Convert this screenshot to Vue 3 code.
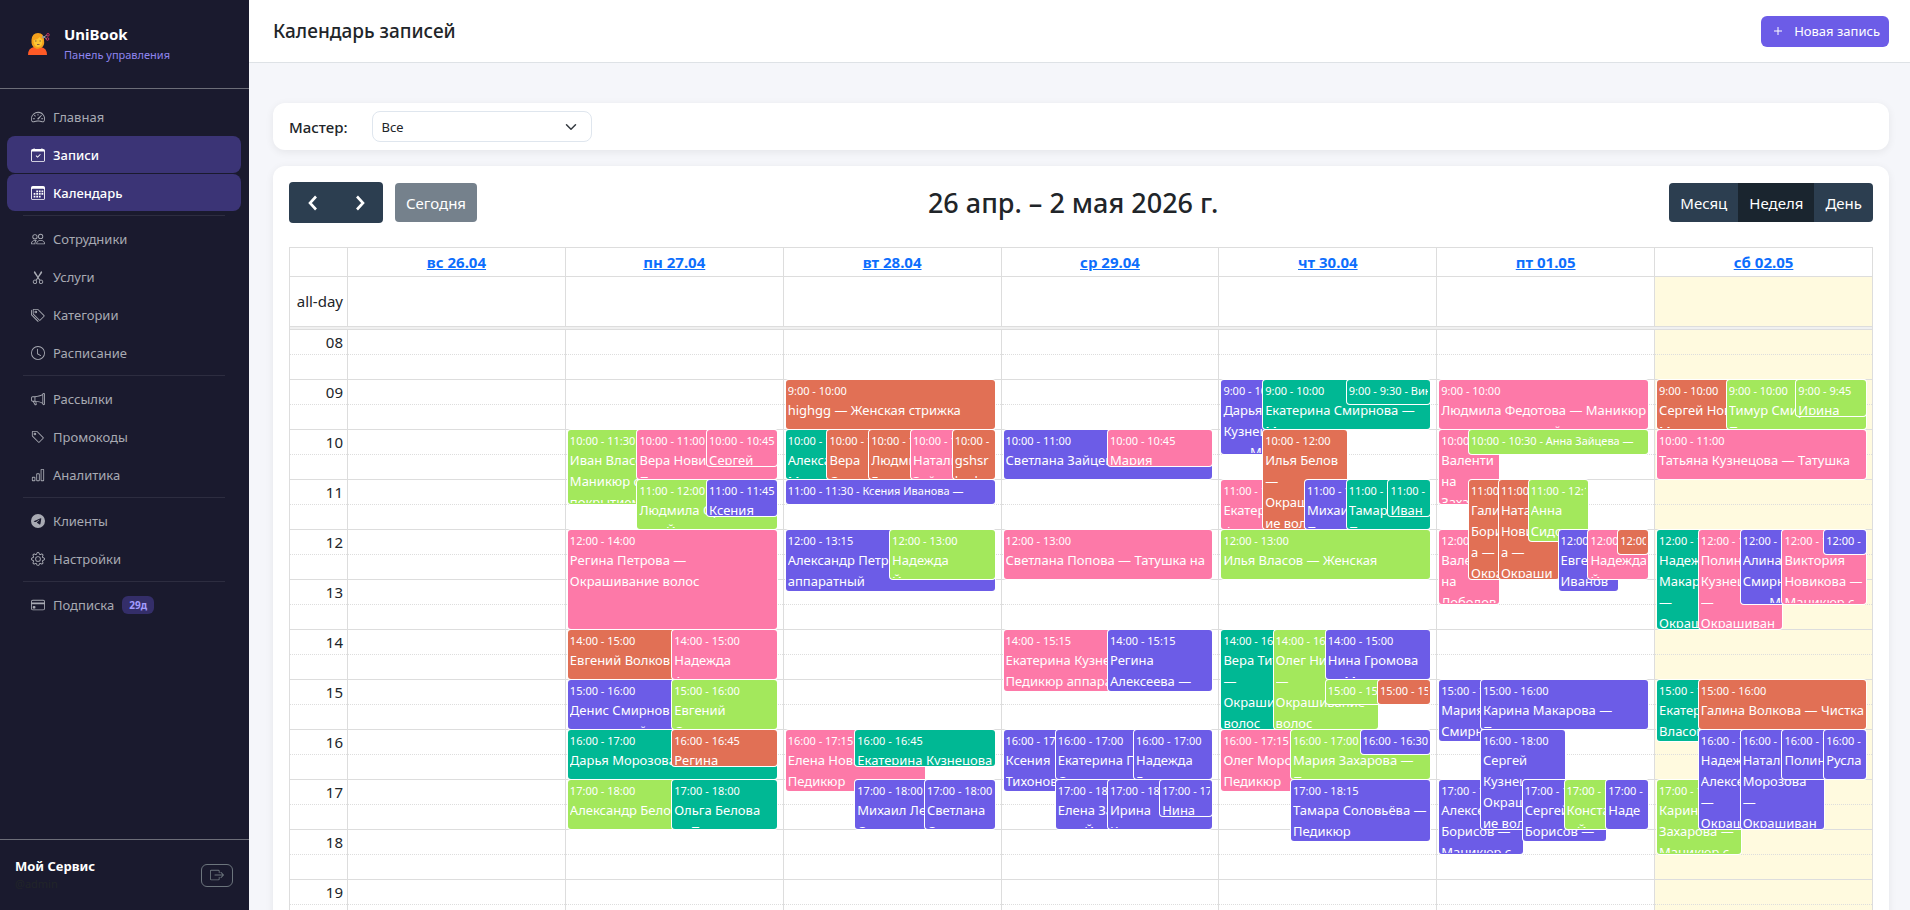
<script setup>
import { ref } from 'vue'

const master = ref('all')
const view = ref('week')

const views = [
  { id: 'month', label: 'Месяц' },
  { id: 'week', label: 'Неделя' },
  { id: 'day', label: 'День' }
]

const menu = [
  [
    { icon: 'speedometer', label: 'Главная' },
    { icon: 'calendarCheck', label: 'Записи', active: true },
    { icon: 'calendarWeek', label: 'Календарь', active: true }
  ],
  [
    { icon: 'people', label: 'Сотрудники' },
    { icon: 'scissors', label: 'Услуги' },
    { icon: 'tags', label: 'Категории' },
    { icon: 'clock', label: 'Расписание' }
  ],
  [
    { icon: 'megaphone', label: 'Рассылки' },
    { icon: 'tag', label: 'Промокоды' },
    { icon: 'chart', label: 'Аналитика' }
  ],
  [
    { icon: 'telegram', label: 'Клиенты' },
    { icon: 'gear', label: 'Настройки' }
  ],
  [
    { icon: 'card', label: 'Подписка', badge: '29д' }
  ]
]

const icons = {
  speedometer: [
    'M8 4a.5.5 0 0 1 .5.5V6a.5.5 0 0 1-1 0V4.5A.5.5 0 0 1 8 4M3.732 5.732a.5.5 0 0 1 .707 0l.915.914a.5.5 0 1 1-.708.708l-.914-.915a.5.5 0 0 1 0-.707M2 10a.5.5 0 0 1 .5-.5h1.586a.5.5 0 0 1 0 1H2.5A.5.5 0 0 1 2 10m9.5 0a.5.5 0 0 1 .5-.5h1.5a.5.5 0 0 1 0 1H12a.5.5 0 0 1-.5-.5m.754-4.246a.39.39 0 0 0-.527-.02L7.547 9.31a.91.91 0 1 0 1.302 1.258l3.434-4.297a.39.39 0 0 0-.029-.518z',
    'M0 10a8 8 0 1 1 15.547 2.661c-.442 1.253-1.845 1.602-2.932 1.25C11.309 13.488 9.475 13 8 13c-1.474 0-3.31.488-4.615.911-1.087.352-2.49.003-2.932-1.25A8 8 0 0 1 0 10m8-7a7 7 0 0 0-6.603 9.329c.203.575.923.876 1.68.63C4.397 12.533 6.358 12 8 12s3.604.532 4.923.96c.757.245 1.477-.056 1.68-.631A7 7 0 0 0 8 3'
  ],
  calendarCheck: [
    'M10.854 7.146a.5.5 0 0 1 0 .708l-3 3a.5.5 0 0 1-.708 0l-1.5-1.5a.5.5 0 1 1 .708-.708L7.5 9.793l2.646-2.647a.5.5 0 0 1 .708 0',
    'M3.5 0a.5.5 0 0 1 .5.5V1h8V.5a.5.5 0 0 1 1 0V1h1a2 2 0 0 1 2 2v11a2 2 0 0 1-2 2H2a2 2 0 0 1-2-2V3a2 2 0 0 1 2-2h1V.5a.5.5 0 0 1 .5-.5M1 4v10a1 1 0 0 0 1 1h12a1 1 0 0 0 1-1V4z'
  ],
  calendarWeek: [
    'M14 0H2a2 2 0 0 0-2 2v12a2 2 0 0 0 2 2h12a2 2 0 0 0 2-2V2a2 2 0 0 0-2-2M1 3.857C1 3.384 1.448 3 2 3h12c.552 0 1 .384 1 .857v10.286c0 .473-.448.857-1 .857H2c-.552 0-1-.384-1-.857z',
    'M6 5h2v2H6zM9 5h2v2H9zM12 5h2v2h-2zM3 8h2v2H3zM6 8h2v2H6zM9 8h2v2H9zM12 8h2v2h-2zM3 11h2v2H3zM6 11h2v2H6zM9 11h2v2H9z'
  ],
  people: [
    'M15 14s1 0 1-1-1-4-5-4-5 3-5 4 1 1 1 1zm-7.978-1L7 12.996c.001-.264.167-1.03.76-1.72C8.312 10.629 9.282 10 11 10c1.717 0 2.687.63 3.24 1.276.593.69.758 1.457.76 1.72l-.008.002-.014.002zM11 7a2 2 0 1 0 0-4 2 2 0 0 0 0 4m3-2a3 3 0 1 1-6 0 3 3 0 0 1 6 0M6.936 9.28a6 6 0 0 0-1.23-.247A7 7 0 0 0 5 9c-4 0-5 3-5 4q0 1 1 1h4.216A2.24 2.24 0 0 1 5 13c0-1.01.377-2.042 1.09-2.904.243-.294.526-.569.846-.816M4.92 10A5.5 5.5 0 0 0 4 13H1c0-.26.164-1.03.76-1.724.545-.636 1.492-1.256 3.16-1.275ZM1.5 5.5a3 3 0 1 1 6 0 3 3 0 0 1-6 0m3-2a2 2 0 1 0 0 4 2 2 0 0 0 0-4'
  ],
  scissors: [
    'M3.5 3.5c-.614-.884-.074-1.962.858-2.5L8 7.226 11.642 1c.932.538 1.472 1.616.858 2.5L8.81 8.61l1.556 2.661a2.5 2.5 0 1 1-.794.637L8 9.73l-1.572 2.177a2.5 2.5 0 1 1-.794-.637L7.19 8.61zm2.5 10a1.5 1.5 0 1 0-3 0 1.5 1.5 0 0 0 3 0m7 0a1.5 1.5 0 1 0-3 0 1.5 1.5 0 0 0 3 0'
  ],
  tags: [
    'M3 2v4.586l7 7L14.586 9l-7-7zM2 2a1 1 0 0 1 1-1h4.586a1 1 0 0 1 .707.293l7 7a1 1 0 0 1 0 1.414l-4.586 4.586a1 1 0 0 1-1.414 0l-7-7A1 1 0 0 1 2 6.586z',
    'M5.5 5a.5.5 0 1 1 0-1 .5.5 0 0 1 0 1m0 1a1.5 1.5 0 1 0 0-3 1.5 1.5 0 0 0 0 3M1 7.086a1 1 0 0 0 .293.707L8.75 15.25l-.043.043a1 1 0 0 1-1.414 0l-7-7A1 1 0 0 1 0 7.586V3a1 1 0 0 1 1-1z'
  ],
  tag: [
    'M6 4.5a1.5 1.5 0 1 1-3 0 1.5 1.5 0 0 1 3 0m-1 0a.5.5 0 1 0-1 0 .5.5 0 0 0 1 0',
    'M2 1h4.586a1 1 0 0 1 .707.293l7 7a1 1 0 0 1 0 1.414l-4.586 4.586a1 1 0 0 1-1.414 0l-7-7A1 1 0 0 1 1 6.586V2a1 1 0 0 1 1-1m0 5.586 7 7L13.586 9l-7-7H2z'
  ],
  clock: [
    'M8 3.5a.5.5 0 0 0-1 0V9a.5.5 0 0 0 .252.434l3.5 2a.5.5 0 0 0 .496-.868L8 8.71z',
    'M8 16A8 8 0 1 0 8 0a8 8 0 0 0 0 16m7-8A7 7 0 1 1 1 8a7 7 0 0 1 14 0'
  ],
  megaphone: [
    'M13 2.5a1.5 1.5 0 0 1 3 0v11a1.5 1.5 0 0 1-3 0v-.214c-2.162-1.241-4.49-1.843-6.912-2.083l.405 2.712A1 1 0 0 1 5.51 15.1h-.548a1 1 0 0 1-.916-.599l-1.85-3.49A2.01 2.01 0 0 1 0 9V7a2.02 2.02 0 0 1 1.992-2.013 75 75 0 0 0 2.483-.075c3.043-.154 6.148-.849 8.525-2.199zm1 0v11a.5.5 0 0 0 1 0v-11a.5.5 0 0 0-1 0m-1 1.35c-2.344 1.205-5.209 1.842-8 2.033v4.233q.27.015.537.036c2.568.189 5.093.744 7.463 1.993zm-9 6.215v-4.13a95 95 0 0 1-1.992.052A1.02 1.02 0 0 0 1 7v2c0 .55.448 1.002 1.006 1.009A61 61 0 0 1 4 10.065m-.657.975 1.609 3.037.01.024h.548l-.002-.014-.443-2.966a68 68 0 0 0-1.722-.082z'
  ],
  chart: [
    'M4 11H2v3h2zm5-4H7v7h2zm5-5v12h-2V2zm-2-1a1 1 0 0 0-1 1v12a1 1 0 0 0 1 1h2a1 1 0 0 0 1-1V2a1 1 0 0 0-1-1zM6 7a1 1 0 0 1 1-1h2a1 1 0 0 1 1 1v7a1 1 0 0 1-1 1H7a1 1 0 0 1-1-1zm-5 4a1 1 0 0 1 1-1h2a1 1 0 0 1 1 1v3a1 1 0 0 1-1 1H2a1 1 0 0 1-1-1z'
  ],
  telegram: [
    'M16 8A8 8 0 1 1 0 8a8 8 0 0 1 16 0M8.287 5.906q-1.168.486-4.666 2.01-.567.225-.595.442c-.03.243.275.339.69.47l.175.055c.408.133.958.288 1.243.294q.39.01.868-.32 3.269-2.206 3.374-2.23c.05-.012.12-.026.166.016s.042.12.037.141c-.03.129-1.227 1.241-1.846 1.817-.193.18-.33.307-.358.336a8 8 0 0 1-.188.186c-.38.366-.664.64.015 1.088.327.216.589.393.85.571.284.194.568.387.936.629q.14.092.27.187c.331.236.63.448.997.414.214-.02.435-.22.547-.82.265-1.417.786-4.486.906-5.751a1.4 1.4 0 0 0-.013-.315.34.34 0 0 0-.114-.217.53.53 0 0 0-.31-.093c-.3.005-.763.166-2.984 1.09'
  ],
  gear: [
    'M8 4.754a3.246 3.246 0 1 0 0 6.492 3.246 3.246 0 0 0 0-6.492M5.754 8a2.246 2.246 0 1 1 4.492 0 2.246 2.246 0 0 1-4.492 0',
    'M9.796 1.343c-.527-1.79-3.065-1.79-3.592 0l-.094.319a.873.873 0 0 1-1.255.52l-.292-.16c-1.64-.892-3.433.902-2.54 2.541l.159.292a.873.873 0 0 1-.52 1.255l-.319.094c-1.79.527-1.79 3.065 0 3.592l.319.094a.873.873 0 0 1 .52 1.255l-.16.292c-.892 1.64.901 3.434 2.541 2.54l.292-.159a.873.873 0 0 1 1.255.52l.094.319c.527 1.79 3.065 1.79 3.592 0l.094-.319a.873.873 0 0 1 1.255-.52l.292.16c1.64.893 3.434-.902 2.54-2.541l-.159-.292a.873.873 0 0 1 .52-1.255l.319-.094c1.79-.527 1.79-3.065 0-3.592l-.319-.094a.873.873 0 0 1-.52-1.255l.16-.292c.893-1.64-.902-3.433-2.541-2.54l-.292.159a.873.873 0 0 1-1.255-.52zm-2.633.283c.246-.835 1.428-.835 1.674 0l.094.319a1.873 1.873 0 0 0 2.693 1.115l.291-.16c.764-.415 1.6.42 1.184 1.185l-.159.292a1.873 1.873 0 0 0 1.116 2.692l.318.094c.835.246.835 1.428 0 1.674l-.319.094a1.873 1.873 0 0 0-1.115 2.693l.16.291c.415.764-.42 1.6-1.185 1.184l-.291-.159a1.873 1.873 0 0 0-2.693 1.116l-.094.318c-.246.835-1.428.835-1.674 0l-.094-.319a1.873 1.873 0 0 0-2.692-1.115l-.292.16c-.764.415-1.6-.42-1.184-1.185l.159-.291A1.873 1.873 0 0 0 1.945 8.93l-.319-.094c-.835-.246-.835-1.428 0-1.674l.319-.094A1.873 1.873 0 0 0 3.06 4.377l-.16-.292c-.415-.764.42-1.6 1.185-1.184l.292.159a1.873 1.873 0 0 0 2.692-1.115z'
  ],
  card: [
    'M0 4a2 2 0 0 1 2-2h12a2 2 0 0 1 2 2v8a2 2 0 0 1-2 2H2a2 2 0 0 1-2-2zm2-1a1 1 0 0 0-1 1v1h14V4a1 1 0 0 0-1-1zm13 4H1v5a1 1 0 0 0 1 1h12a1 1 0 0 0 1-1z',
    'M2 10a1 1 0 0 1 1-1h1a1 1 0 0 1 1 1v1a1 1 0 0 1-1 1H3a1 1 0 0 1-1-1z'
  ]
}

const START_HOUR = 8
const HOUR_HEIGHT = 50
const hours = ['08', '09', '10', '11', '12', '13', '14', '15', '16', '17', '18', '19', '20']

// [start, end, color, lanes, first lane, last lane, title]
const days = [
  { label: 'вс 26.04', events: [] },
  {
    label: 'пн 27.04',
    events: [
      ['10:00', '11:30', 'lime', 3, 0, 2, 'Иван Власов —\nМаникюр с\nпокрытием'],
      ['10:00', '11:00', 'pink', 3, 1, 3, 'Вера Новикова —\nПедикюр'],
      ['10:00', '10:45', 'pink', 3, 2, 3, 'Сергей'],
      ['11:00', '12:00', 'lime', 3, 1, 3, 'Людмила Орлова\n   — Йод'],
      ['11:00', '11:45', 'purple', 3, 2, 3, 'Ксения'],
      ['12:00', '14:00', 'pink', 1, 0, 1, 'Регина Петрова —\nОкрашивание волос'],
      ['14:00', '15:00', 'orange', 2, 0, 2, 'Евгений Волков'],
      ['14:00', '15:00', 'pink', 2, 1, 2, 'Надежда\nАлексеева'],
      ['15:00', '16:00', 'purple', 2, 0, 2, 'Денис Смирнов —\nаппаратный маникюр'],
      ['15:00', '16:00', 'lime', 2, 1, 2, 'Евгений\nСмирнов'],
      ['16:00', '17:00', 'teal', 2, 0, 2, 'Дарья Морозова —'],
      ['16:00', '16:45', 'orange', 2, 1, 2, 'Регина'],
      ['17:00', '18:00', 'lime', 2, 0, 2, 'Александр Белов —'],
      ['17:00', '18:00', 'teal', 2, 1, 2, 'Ольга Белова\n— Педикюр']
    ]
  },
  {
    label: 'вт 28.04',
    events: [
      ['9:00', '10:00', 'orange', 1, 0, 1, 'highgg — Женская стрижка'],
      ['10:00', '11:00', 'teal', 5, 0, 2, 'Александра\nМаникюр'],
      ['10:00', '11:00', 'orange', 5, 1, 3, 'Вера\nСоколова'],
      ['10:00', '11:00', 'orange', 5, 2, 4, 'Людмила\nГромова'],
      ['10:00', '11:00', 'pink', 5, 3, 5, 'Наталья\nЗайцева'],
      ['10:00', '11:00', 'orange', 5, 4, 5, 'gshsr\nhsrh'],
      ['11:00', '11:30', 'purple', 1, 0, 1, 'Ксения Иванова —'],
      ['12:00', '13:15', 'purple', 2, 0, 2, 'Александр Петров —\nаппаратный'],
      ['12:00', '13:00', 'lime', 2, 1, 2, 'Надежда\nЙоргова'],
      ['16:00', '17:15', 'pink', 3, 0, 2, 'Елена Новикова —\nПедикюр'],
      ['16:00', '16:45', 'teal', 3, 1, 3, 'Екатерина Кузнецова'],
      ['17:00', '18:00', 'purple', 3, 1, 3, 'Михаил Лебедев —\nСтрижка'],
      ['17:00', '18:00', 'purple', 3, 2, 3, 'Светлана\nСоколова']
    ]
  },
  {
    label: 'ср 29.04',
    events: [
      ['10:00', '11:00', 'purple', 2, 0, 2, 'Светлана Зайцева —'],
      ['10:00', '10:45', 'pink', 2, 1, 2, 'Мария'],
      ['12:00', '13:00', 'pink', 1, 0, 1, 'Светлана Попова — Татушка на'],
      ['14:00', '15:15', 'pink', 2, 0, 2, 'Екатерина Кузнецова\nПедикюр аппаратный'],
      ['14:00', '15:15', 'purple', 2, 1, 2, 'Регина\nАлексеева —'],
      ['16:00', '17:15', 'purple', 4, 0, 2, 'Ксения\nТихонова —'],
      ['16:00', '17:00', 'purple', 4, 1, 4, 'Екатерина Попова\nОкрашивание'],
      ['16:00', '17:00', 'purple', 4, 2.5, 4, 'Надежда\nГромова'],
      ['17:00', '18:00', 'purple', 4, 1, 3, 'Елена Захарова\n   — Йод'],
      ['17:00', '18:00', 'purple', 4, 2, 4, 'Ирина\nКузнецова'],
      ['17:00', '17:45', 'purple', 4, 3, 4, 'Нина']
    ]
  },
  {
    label: 'чт 30.04',
    events: [
      ['9:00', '10:30', 'purple', 5, 0, 2, 'Дарья\nКузнецова\n   — Маникюр'],
      ['9:00', '10:00', 'teal', 5, 1, 5, 'Екатерина Смирнова —\nМаникюр с покрытием'],
      ['9:00', '9:30', 'teal', 5, 3, 5, 'Виктория'],
      ['10:00', '12:00', 'orange', 5, 1, 3, 'Илья Белов\n—\nОкрашиван\nие волос'],
      ['11:00', '12:00', 'pink', 5, 0, 2, 'Екатерина\nФедотова'],
      ['11:00', '12:00', 'purple', 5, 2, 4, 'Михаил\nПетров'],
      ['11:00', '12:00', 'teal', 5, 3, 5, 'Тамара\nПопова'],
      ['11:00', '11:45', 'teal', 5, 4, 5, 'Иван'],
      ['12:00', '13:00', 'lime', 1, 0, 1, 'Илья Власов — Женская'],
      ['14:00', '16:00', 'teal', 4, 0, 2, 'Вера Титова\n—\nОкрашивание\nволос'],
      ['14:00', '16:00', 'lime', 4, 1, 3, 'Олег Никитин\n—\nОкрашивание\nволос'],
      ['14:00', '15:00', 'purple', 4, 2, 4, 'Нина Громова\n— Маникюр'],
      ['15:00', '15:30', 'lime', 4, 2, 4, 'Вера'],
      ['15:00', '15:30', 'orange', 4, 3, 4, 'Анна'],
      ['16:00', '17:15', 'pink', 3, 0, 2, 'Олег Морозов —\nПедикюр'],
      ['16:00', '17:00', 'lime', 3, 1, 3, 'Мария Захарова —\nПедикюр'],
      ['16:00', '16:30', 'purple', 3, 2, 3, ''],
      ['17:00', '18:15', 'purple', 3, 1, 3, 'Тамара Соловьёва —\nПедикюр']
    ]
  },
  {
    label: 'пт 01.05',
    events: [
      ['9:00', '10:00', 'pink', 1, 0, 1, 'Людмила Федотова — Маникюр\nс покрытием гелей'],
      ['10:00', '11:30', 'pink', 7, 0, 2, 'Валенти\nна\nЗахарова'],
      ['10:00', '10:30', 'lime', 7, 1, 7, 'Анна Зайцева —'],
      ['11:00', '13:00', 'orange', 7, 1, 3, 'Галина\nБорисов\nа —\nОкраши'],
      ['11:00', '13:00', 'orange', 7, 2, 4, 'Наталья\nНовиков\nа —\nОкраши'],
      ['11:00', '12:15', 'lime', 7, 3, 5, 'Анна\nСидорова'],
      ['12:00', '13:30', 'pink', 7, 0, 2, 'Валенти\nна\nЛободов'],
      ['12:00', '13:15', 'purple', 7, 4, 6, 'Евгений\nИванов'],
      ['12:00', '13:00', 'pink', 7, 5, 7, 'Надежда\nЙоргова'],
      ['12:00', '12:30', 'orange', 7, 6, 7, ''],
      ['15:00', '16:15', 'purple', 5, 0, 2, 'Мария\nСмирнова —'],
      ['15:00', '16:00', 'purple', 5, 1, 5, 'Карина Макарова —\nПедикюр'],
      ['16:00', '18:00', 'purple', 5, 1, 3, 'Сергей\nКузнецов —\nОкрашиван\nие волос'],
      ['17:00', '18:30', 'purple', 5, 0, 2, 'Алексей\nБорисов —\nМаникюр с'],
      ['17:00', '18:15', 'purple', 5, 2, 4, 'Сергей\nБорисов —'],
      ['17:00', '18:00', 'lime', 5, 3, 5, 'Константин\n   Йод'],
      ['17:00', '18:00', 'purple', 5, 4, 5, 'Наде']
    ]
  },
  {
    label: 'сб 02.05',
    today: true,
    events: [
      ['9:00', '10:00', 'orange', 3, 0, 2, 'Сергей Новиков —\nМаникюр'],
      ['9:00', '10:00', 'lime', 3, 1, 3, 'Тимур Смирнов —\nПедикюр'],
      ['9:00', '9:45', 'lime', 3, 2, 3, 'Ирина'],
      ['10:00', '11:00', 'pink', 1, 0, 1, 'Татьяна Кузнецова — Татушка'],
      ['12:00', '14:00', 'teal', 5, 0, 2, 'Надежда\nМакарова\n—\nОкрашиван'],
      ['12:00', '14:00', 'pink', 5, 1, 3, 'Полина\nКузнецова\n—\nОкрашиван'],
      ['12:00', '13:30', 'purple', 5, 2, 4, 'Алина\nСмирнова\n   — Маникюр'],
      ['12:00', '13:30', 'pink', 5, 3, 5, 'Виктория\nНовикова —\nМаникюр с'],
      ['12:00', '12:30', 'purple', 5, 4, 5, ''],
      ['15:00', '16:15', 'teal', 5, 0, 2, 'Екатерина\nВласова —'],
      ['15:00', '16:00', 'orange', 5, 1, 5, 'Галина Волкова — Чистка'],
      ['16:00', '18:00', 'purple', 5, 1, 3, 'Надежда\nАлексеева\n—\nОкрашиван'],
      ['16:00', '18:00', 'purple', 5, 2, 4, 'Наталья\nМорозова\n—\nОкрашиван'],
      ['16:00', '17:00', 'purple', 5, 3, 5, 'Полина'],
      ['16:00', '17:00', 'purple', 5, 4, 5, 'Русла'],
      ['17:00', '18:30', 'lime', 5, 0, 2, 'Карина\nЗахарова —\nМаникюр с']
    ]
  }
]

const toMinutes = (time) => {
  const [h, m] = time.split(':').map(Number)
  return (h - START_HOUR) * 60 + m
}

const duration = (ev) => toMinutes(ev[1]) - toMinutes(ev[0])

const eventStyle = (ev) => ({
  top: `${(toMinutes(ev[0]) * HOUR_HEIGHT) / 60 + 1}px`,
  height: `${Math.floor((duration(ev) * HOUR_HEIGHT) / 60 - 1)}px`,
  left: `${(ev[4] / ev[3]) * 100}%`,
  width: `${((ev[5] - ev[4]) / ev[3]) * 100}%`,
  zIndex: Math.ceil(ev[4]) + 1
})
</script>

<template>
  <div class="layout">
    <aside class="sidebar">
      <div class="brand">
        <svg class="brand-logo" viewBox="0 0 22 22" aria-hidden="true">
          <path d="M0 22q0-7 6-8h7q6 1 6 8z" fill="#ff5a26" />
          <path d="M7 12h5v3q-2.500 2-5 0z" fill="#f29a1d" />
          <path d="M3.500 7Q4 0 10 0t6 7q1 6-3 8H7Q3 13 3.500 7z" fill="#f5a11c" />
          <path d="M5.500 7q4 0 6-3 1 2 3 3 0 7-4.500 7T5.500 7z" fill="#fdc633" />
          <path d="M7 8h1.500M11.500 8H13M9 11.500h2.500" stroke="#8a6140" stroke-width="1" />
          <path d="M14 5l5-3M14 3l5 3" stroke="#8d98a5" stroke-width="1" />
          <circle cx="20" cy="1.800" r="1.300" fill="none" stroke="#c2325e" />
          <circle cx="19.500" cy="6" r="1.300" fill="none" stroke="#c2325e" />
        </svg>
        <div>
          <div class="brand-name">UniBook</div>
          <div class="brand-sub">Панель управления</div>
        </div>
      </div>

      <nav class="menu">
        <div v-for="(group, i) in menu" :key="i" class="menu-group">
          <a
            v-for="item in group"
            :key="item.label"
            href="#"
            class="menu-link"
            :class="{ active: item.active }"
          >
            <svg class="menu-icon" viewBox="0 0 16 16" fill="currentColor" fill-rule="evenodd" aria-hidden="true">
              <path v-for="d in icons[item.icon]" :key="d" :d="d" />
            </svg>
            <span>{{ item.label }}</span>
            <span v-if="item.badge" class="menu-badge">{{ item.badge }}</span>
          </a>
        </div>
      </nav>

      <div class="account">
        <div>
          <div class="account-name">Мой Сервис</div>
          <div class="account-login">@admin</div>
        </div>
        <button class="logout" type="button" aria-label="Выйти">
          <svg viewBox="0 0 16 16" width="14" height="14" fill="currentColor" aria-hidden="true">
            <path d="M10 12.5a.5.5 0 0 1-.5.5h-8a.5.5 0 0 1-.5-.5v-9a.5.5 0 0 1 .5-.5h8a.5.5 0 0 1 .5.5v2a.5.5 0 0 0 1 0v-2A1.5 1.5 0 0 0 9.5 2h-8A1.5 1.5 0 0 0 0 3.5v9A1.5 1.5 0 0 0 1.5 14h8a1.5 1.5 0 0 0 1.5-1.5v-2a.5.5 0 0 0-1 0z" />
            <path d="M15.854 8.354a.5.5 0 0 0 0-.708l-3-3a.5.5 0 0 0-.708.708L14.293 7.5H5.5a.5.5 0 0 0 0 1h8.793l-2.147 2.146a.5.5 0 0 0 .708.708z" />
          </svg>
        </button>
      </div>
    </aside>

    <main class="main">
      <header class="topbar">
        <h1 class="page-title">Календарь записей</h1>
        <button class="btn-new" type="button">
          <svg viewBox="0 0 10 10" width="10" height="10" aria-hidden="true">
            <path d="M5 1v8M1 5h8" stroke="currentColor" fill="none" />
          </svg>
          Новая запись
        </button>
      </header>

      <div class="content">
        <section class="card filter">
          <label for="master" class="filter-label">Мастер:</label>
          <div class="select-wrap">
            <select id="master" v-model="master" class="filter-select">
              <option value="all">Все</option>
            </select>
            <svg class="select-arrow" viewBox="0 0 16 16" width="12" height="12" aria-hidden="true">
              <path d="m2 5 6 6 6-6" fill="none" stroke="#343a40" stroke-width="2" stroke-linecap="round" stroke-linejoin="round" />
            </svg>
          </div>
        </section>

        <section class="card calendar">
          <div class="toolbar">
            <div class="toolbar-left">
              <div class="btn-group">
                <button class="btn btn-arrow" type="button" aria-label="Назад">
                  <svg viewBox="0 0 24 24" width="24" height="24" aria-hidden="true">
                    <path d="M15 5.500 9 12l6 6.500" />
                  </svg>
                </button>
                <button class="btn btn-arrow" type="button" aria-label="Вперёд">
                  <svg viewBox="0 0 24 24" width="24" height="24" aria-hidden="true">
                    <path d="m9 5.500 6 6.500-6 6.500" />
                  </svg>
                </button>
              </div>
              <button class="btn btn-today" type="button" disabled>Сегодня</button>
            </div>
            <h2 class="toolbar-title">26 апр. – 2 мая 2026 г.</h2>
            <div class="toolbar-right">
              <div class="btn-group">
                <button
                  v-for="v in views"
                  :key="v.id"
                  type="button"
                  class="btn"
                  :class="{ active: view === v.id }"
                  @click="view = v.id"
                >
                  {{ v.label }}
                </button>
              </div>
            </div>
          </div>

          <table class="grid">
            <colgroup>
              <col class="col-axis" />
              <col v-for="day in days" :key="day.label" />
            </colgroup>
            <thead>
              <tr>
                <th></th>
                <th v-for="day in days" :key="day.label" scope="col">
                  <a href="#" class="day-link">{{ day.label }}</a>
                </th>
              </tr>
            </thead>
            <tbody>
              <tr class="row-allday">
                <td class="axis">all-day</td>
                <td v-for="day in days" :key="day.label" :class="{ today: day.today }"></td>
              </tr>
              <tr class="row-divider">
                <td colspan="8"></td>
              </tr>
              <tr class="row-time">
                <td>
                  <div v-for="h in hours" :key="h" class="slot slot-label">{{ h }}</div>
                </td>
                <td v-for="day in days" :key="day.label" :class="{ today: day.today }">
                  <div class="day-col">
                    <div v-for="h in hours" :key="h" class="slot"></div>
                    <div class="events">
                      <div
                        v-for="(ev, i) in day.events"
                        :key="i"
                        class="event"
                        :class="[ev[2], { short: duration(ev) <= 30 }]"
                        :style="eventStyle(ev)"
                      >
                        <div class="event-body">
                          <div class="event-time">{{ ev[0] }} - {{ ev[1] }}</div>
                          <div v-if="ev[6]" class="event-title">{{ ev[6] }}</div>
                        </div>
                      </div>
                    </div>
                  </div>
                </td>
              </tr>
            </tbody>
          </table>
        </section>
      </div>
    </main>
  </div>
</template>

<style>
body {
  margin: 0;
  background: #f5f6fa;
}
</style>

<style scoped>
* {
  box-sizing: border-box;
}

.layout {
  display: flex;
  height: 100vh;
  font-family: 'Noto Sans', 'Open Sans', sans-serif;
  font-size: 15px;
  line-height: 24px;
  color: #212529;
}

button,
select {
  font-family: inherit;
}

/* sidebar */
.sidebar {
  display: flex;
  flex-direction: column;
  flex: 0 0 249px;
  background: #1a1a2e;
  color: #fff;
}

.brand {
  display: flex;
  align-items: center;
  gap: 14px;
  height: 89px;
  padding: 0 28px;
  border-bottom: 1px solid #6c6d78;
}

.brand-logo {
  width: 22px;
  height: 22px;
}

.brand-name {
  font-size: 15px;
  font-weight: 700;
  line-height: 22px;
}

.brand-sub {
  font-size: 11px;
  line-height: 20px;
  color: #8f85ee;
}

.menu {
  flex: 1;
  padding: 9px 8px 9px 7px;
}

.menu-group {
  display: flex;
  flex-direction: column;
  gap: 1px;
}

.menu-group + .menu-group::before {
  content: '';
  height: 1px;
  margin: 4px 16px 3px;
  background: #2d2d40;
}

.menu-link {
  display: flex;
  align-items: center;
  gap: 8px;
  height: 37px;
  padding: 0 24px;
  border-radius: 8px;
  color: #a8aab3;
  font-size: 13px;
  text-decoration: none;
}

.menu-link.active {
  background: #3b3476;
  color: #fff;
  font-weight: 500;
}

.menu-icon {
  width: 14px;
  height: 14px;
}

.menu-badge {
  padding: 0 7px;
  border-radius: 6px;
  background: #342e69;
  color: #a29bfe;
  font-size: 10px;
  font-weight: 700;
  line-height: 18px;
}

.account {
  display: flex;
  align-items: center;
  justify-content: space-between;
  height: 71px;
  padding: 0 16px 0 15px;
  border-top: 1px solid #6c6d78;
}

.account-name {
  font-size: 13px;
  font-weight: 700;
  line-height: 18px;
}

.account-login {
  font-size: 11px;
  line-height: 18px;
  color: #212529;
}

.logout {
  display: flex;
  align-items: center;
  justify-content: center;
  width: 32px;
  height: 23px;
  padding: 0;
  border: 1px solid #6c757d;
  border-radius: 6px;
  background: transparent;
  color: #6c757d;
}

/* main area */
.main {
  flex: 1;
  min-width: 0;
  overflow-y: auto;
  scrollbar-width: none;
  background: #f5f6fa;
}

.topbar {
  display: flex;
  align-items: center;
  justify-content: space-between;
  height: 63px;
  padding: 0 21px 0 24px;
  border-bottom: 1px solid #dee2e6;
  background: #fff;
}

.page-title {
  margin: 0;
  font-size: 19px;
  font-weight: 500;
}

.btn-new {
  display: flex;
  align-items: center;
  gap: 11px;
  height: 31px;
  padding: 0 9px 0 12px;
  border: none;
  border-radius: 6px;
  background: #6c5ce7;
  color: #fff;
  font-size: 13px;
}

.content {
  padding: 40px 21px 24px 24px;
}

.card {
  border-radius: 12px;
  background: #fff;
  box-shadow: 0 2px 8px rgba(0, 0, 0, 0.07);
}

.filter {
  display: flex;
  align-items: center;
  gap: 24px;
  height: 47px;
  margin-bottom: 16px;
  padding: 0 16px;
}

.filter-label {
  font-weight: 500;
}

.select-wrap {
  position: relative;
  width: 220px;
}

.filter-select {
  display: block;
  width: 100%;
  height: 31px;
  padding: 0 9px;
  border: 1px solid #dfe6ee;
  border-radius: 8px;
  background: #fff;
  color: #212529;
  font-size: 13px;
  appearance: none;
}

.select-arrow {
  position: absolute;
  top: 10px;
  right: 15px;
  pointer-events: none;
}

/* calendar toolbar */
.calendar {
  padding: 16px;
}

.toolbar {
  display: flex;
  align-items: center;
  justify-content: space-between;
  height: 41px;
  margin-bottom: 24px;
}

.toolbar-left {
  display: flex;
  align-items: center;
  gap: 12px;
}

.toolbar-title {
  margin: 0;
  font-size: 27px;
  font-weight: 500;
}

.btn-group {
  display: flex;
  overflow: hidden;
  border-radius: 4px;
}

.btn {
  display: flex;
  align-items: center;
  height: 39px;
  padding: 0 11px;
  border: none;
  background: #2c3e50;
  color: #fff;
  font-size: 15px;
}

.btn.active {
  background: #1a252f;
}

.btn-arrow {
  width: 47px;
  height: 41px;
  justify-content: center;
}

.btn-arrow svg {
  fill: none;
  stroke: currentColor;
  stroke-width: 2.6;
}

.btn-today {
  border-radius: 4px;
  opacity: 0.65;
}

/* week grid */
.grid {
  width: 100%;
  table-layout: fixed;
  border-collapse: separate;
  border-spacing: 0;
  border: 1px solid #ddd;
  border-left: none;
}

.col-axis {
  width: 58px;
}

.grid th,
.grid td {
  padding: 0;
  border-left: 1px solid #ddd;
  vertical-align: top;
}

.grid th {
  height: 28px;
  line-height: 28px;
}

.day-link {
  color: #0d6efd;
  font-weight: 700;
}

.row-allday td {
  height: 50px;
  border-top: 1px solid #ddd;
}

.grid .axis {
  padding: 12px 4px 0;
  text-align: right;
}

.row-divider td {
  height: 3px;
  border-top: 1px solid #ddd;
  background: #f0f0f0;
}

.today {
  background: rgba(255, 220, 40, 0.15);
}

.day-col {
  position: relative;
}

.slot {
  position: relative;
  height: 50px;
  border-top: 1px solid #ddd;
}

.slot::after {
  content: '';
  position: absolute;
  top: 24px;
  left: 0;
  right: 0;
  border-top: 1px dotted #ddd;
}

.slot-label {
  padding: 0 4px;
  text-align: right;
}

.events {
  position: absolute;
  top: 0;
  bottom: 0;
  left: 2px;
  right: 6px;
}

.event {
  position: absolute;
  padding: 1px 2px;
  border-radius: 3px;
  box-shadow: 0 0 0 1px #fff;
  color: #fff;
  font-size: 13px;
  line-height: 21px;
}

.event-body {
  height: 100%;
  overflow: hidden;
}

.event-time {
  font-size: 11px;
  line-height: 19px;
  white-space: nowrap;
}

.event-title {
  white-space: pre;
}

.short .event-body {
  display: flex;
}

.short .event-title {
  font-size: 11px;
  line-height: 19px;
}

.short .event-title::before {
  content: ' - ';
}

.purple {
  background: #6c5ce7;
}

.pink {
  background: #fd79a8;
}

.orange {
  background: #e17055;
}

.teal {
  background: #00b894;
}

.lime {
  background: #a3e85c;
}
</style>
